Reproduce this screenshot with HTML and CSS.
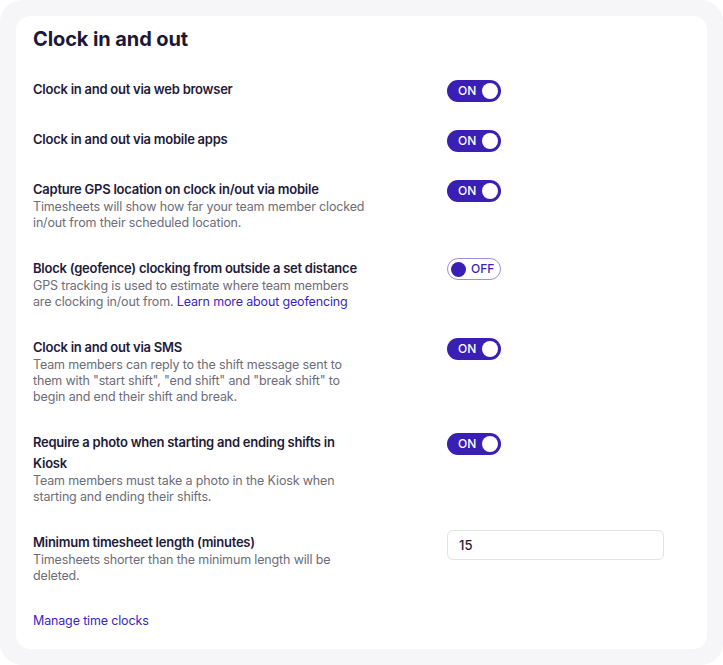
FILE: index.html
```html
<!DOCTYPE html>
<html lang="en">
<head>
<meta charset="utf-8">
<title>Clock in and out</title>
<link rel="stylesheet" href="styles.css">
</head>
<body>
<div class="frame">
  <section class="card">
    <h1 class="title">Clock in and out</h1>
    <div class="settings">
      <div class="row">
        <div class="info">
          <div class="label">Clock in and out via web browser</div>
        </div>
        <div class="control"><span class="toggle on"><span class="tlabel">ON</span><span class="knob"></span></span></div>
      </div>
      <div class="row">
        <div class="info">
          <div class="label">Clock in and out via mobile apps</div>
        </div>
        <div class="control"><span class="toggle on"><span class="tlabel">ON</span><span class="knob"></span></span></div>
      </div>
      <div class="row">
        <div class="info">
          <div class="label">Capture GPS location on clock in/out via mobile</div>
          <div class="desc">Timesheets will show how far your team member clocked in/out from their scheduled location.</div>
        </div>
        <div class="control"><span class="toggle on"><span class="tlabel">ON</span><span class="knob"></span></span></div>
      </div>
      <div class="row">
        <div class="info">
          <div class="label">Block (geofence) clocking from outside a set distance</div>
          <div class="desc">GPS tracking is used to estimate where team members are clocking in/out from. <a class="link" href="#">Learn more about geofencing</a></div>
        </div>
        <div class="control"><span class="toggle off"><span class="knob"></span><span class="tlabel">OFF</span></span></div>
      </div>
      <div class="row">
        <div class="info">
          <div class="label">Clock in and out via SMS</div>
          <div class="desc">Team members can reply to the shift message sent to them with "start shift", "end shift" and "break shift" to begin and end their shift and break.</div>
        </div>
        <div class="control"><span class="toggle on"><span class="tlabel">ON</span><span class="knob"></span></span></div>
      </div>
      <div class="row">
        <div class="info">
          <div class="label">Require a photo when starting and ending shifts in Kiosk</div>
          <div class="desc">Team members must take a photo in the Kiosk when starting and ending their shifts.</div>
        </div>
        <div class="control"><span class="toggle on"><span class="tlabel">ON</span><span class="knob"></span></span></div>
      </div>
      <div class="row">
        <div class="info">
          <div class="label">Minimum timesheet length (minutes)</div>
          <div class="desc">Timesheets shorter than the minimum length will be deleted.</div>
        </div>
        <div class="control control-input"><div class="input">15</div></div>
      </div>
      <div class="footer"><a class="link" href="#">Manage time clocks</a></div>
    </div>
  </section>
</div>
</body>
</html>
```

FILE: styles.css
```css
html, body {
  margin: 0;
  padding: 0;
  background: #ffffff;
}
body {
  font-family: Inter, "Noto Sans", "Liberation Sans", sans-serif;
  color: #1e1b3a;
}
.frame {
  box-sizing: border-box;
  width: 723px;
  height: 665px;
  background: #f6f6f9;
  border-radius: 22px;
  padding: 16px;
}
.card {
  box-sizing: border-box;
  height: 633px;
  width: 691px;
  background: #ffffff;
  border-radius: 14px;
  padding: 11px 17px 0 17px;
}
.title {
  margin: 0;
  font-size: 20px;
  line-height: 24px;
  font-weight: 700;
  color: #1b1838;
  letter-spacing: -0.1px;
}
.settings {
  margin-top: 27px;
  display: flex;
  flex-direction: column;
  gap: 26px;
}
.row {
  display: grid;
  grid-template-columns: 336px 217px;
  column-gap: 78px;
  align-items: start;
}
.label {
  font-size: 13px;
  line-height: 21px;
  font-weight: 600;
  letter-spacing: -0.25px;
  color: #1e1b3a;
  padding-top: 1px;
  margin-bottom: -1px;
}
.desc {
  font-size: 12.5px;
  line-height: 16px;
  letter-spacing: -0.15px;
  color: #6d6c78;
}
.link {
  color: #3b1fc4;
  text-decoration: none;
}
.control {
  padding-top: 1px;
}
.control-input {
  padding-top: 0;
  margin-top: -1px;
}
.toggle {
  box-sizing: border-box;
  display: inline-flex;
  align-items: center;
  width: 54px;
  height: 22px;
  border-radius: 11px;
  font-size: 12px;
  font-weight: 500;
  line-height: 1;
}
.toggle.on {
  background: #3a1fb4;
  color: #ffffff;
  padding: 0 3px 0 11px;
  justify-content: space-between;
}
.toggle.on .knob {
  width: 16px;
  height: 16px;
  border-radius: 50%;
  background: #ffffff;
}
.toggle.off {
  background: #ffffff;
  border: 1px solid #9d90e2;
  color: #3a1fb4;
  padding: 0 5px 0 3px;
  gap: 5px;
}
.toggle.off .knob {
  width: 15px;
  height: 15px;
  border-radius: 50%;
  background: #3a1fb4;
}
.input {
  box-sizing: border-box;
  height: 30px;
  border: 1px solid #e2e2e8;
  border-radius: 6px;
  padding: 0 11px;
  display: flex;
  align-items: center;
  font-size: 13px;
  font-weight: 500;
  color: #1e1b3a;
}
.footer {
  font-size: 12.5px;
  line-height: 20px;
  letter-spacing: -0.15px;
  padding-top: 1px;
}
```
